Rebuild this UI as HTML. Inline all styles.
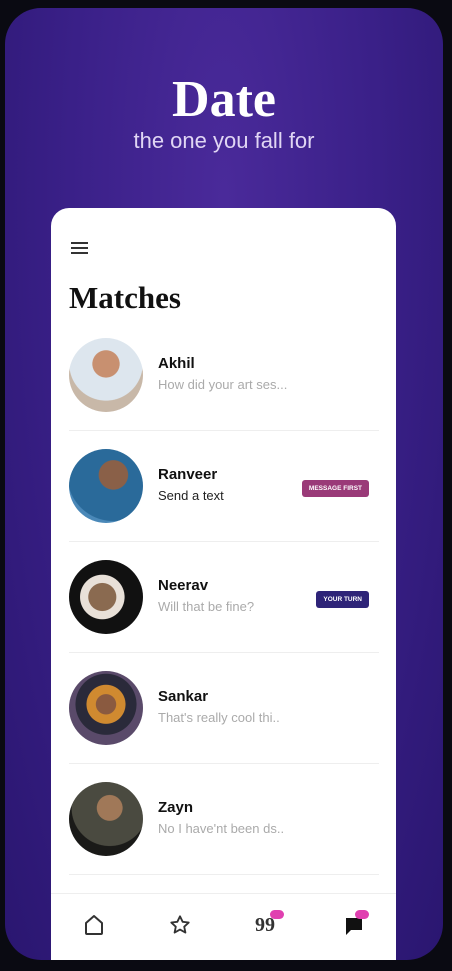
<!DOCTYPE html>
<html><head><style>
*{margin:0;padding:0;box-sizing:border-box}
body{width:452px;height:971px;background:#0a0a12;position:relative;overflow:hidden;font-family:"Liberation Sans",sans-serif}
.phone{position:absolute;left:5px;top:8px;width:438px;height:952px;border-radius:36px;background:radial-gradient(ellipse at 50% 20%,#4a2a9a,#3a2088 50%,#2a1670);overflow:hidden}
.title{position:absolute;top:62px;width:100%;text-align:center;color:#fff;font-family:"Liberation Serif",serif;font-weight:bold;font-size:52px}
.sub{position:absolute;top:120px;width:100%;text-align:center;color:#e0d6f4;font-size:22px}
.card{position:absolute;left:46px;top:200px;width:345px;height:760px;background:#fff;border-radius:18px 18px 0 0}
.ham{position:absolute;left:20px;top:34px;width:17px}
.ham i{display:block;height:2px;background:#333;margin-bottom:3px}
h1{position:absolute;left:18px;top:72px;font-family:"Liberation Serif",serif;font-size:31px;color:#111}
.row{position:absolute;left:18px;width:310px;height:111px}
.av{position:absolute;left:0;top:0;width:74px;height:74px;border-radius:50%}
.nm{position:absolute;left:89px;top:17px;font-weight:bold;font-size:15px;color:#111}
.ms{position:absolute;left:89px;top:39px;font-size:13px;color:#aaa}
.ln{position:absolute;left:0;right:0;top:92px;height:1px;background:#eee}
.bd{position:absolute;right:10px;top:31px;font-size:6.5px;font-weight:bold;color:#fff;padding:5px 7px;border-radius:3px}
.nav{position:absolute;left:0;top:685px;width:345px;border-top:1px solid #eee;height:75px}
.pill{position:absolute;width:14px;height:9px;border-radius:5px;background:#e040b0}
</style></head><body>
<div class="phone">
<div class="title">Date</div>
<div class="sub">the one you fall for</div>
<div class="card">
<div class="ham"><i></i><i></i><i></i></div>
<h1>Matches</h1>
<div class="row" style="top:130px"><div class="av" style="background:radial-gradient(circle at 50% 35%,#c89070 0 22%,#dde6ee 23% 60%,#c8b8a8 61%)"></div><div class="nm">Akhil</div><div class="ms">How did your art ses...</div><div class="ln"></div></div>
<div class="row" style="top:241px"><div class="av" style="background:radial-gradient(circle at 60% 35%,#8a6048 0 22%,#2a6a9a 23% 70%,#4a88b8 71%)"></div><div class="nm">Ranveer</div><div class="ms" style="color:#222">Send a text</div><div class="bd" style="background:#9a3a78">MESSAGE FIRST</div><div class="ln"></div></div>
<div class="row" style="top:352px"><div class="av" style="background:radial-gradient(circle at 45% 50%,#8a6a50 0 25%,#e8e0d8 26% 40%,#111 41%)"></div><div class="nm">Neerav</div><div class="ms">Will that be fine?</div><div class="bd" style="background:#2e2478">YOUR TURN</div><div class="ln"></div></div>
<div class="row" style="top:463px"><div class="av" style="background:radial-gradient(circle at 50% 45%,#8a5a40 0 18%,#d08a30 19% 35%,#2a2a3a 36% 55%,#5a4a6a 56%)"></div><div class="nm">Sankar</div><div class="ms">That's really cool thi..</div><div class="ln"></div></div>
<div class="row" style="top:574px"><div class="av" style="background:radial-gradient(circle at 55% 35%,#a07858 0 20%,#4a4a40 21% 60%,#1a1a18 61%)"></div><div class="nm">Zayn</div><div class="ms">No I have'nt been ds..</div><div class="ln"></div></div>
<div class="nav">
<svg style="position:absolute;left:33px;top:20px" width="20" height="22" viewBox="0 0 20 22"><path d="M2 9 L10 2 L18 9 V19 Q18 20 17 20 H3 Q2 20 2 19 Z" fill="none" stroke="#333" stroke-width="2" stroke-linejoin="round"/></svg>
<svg style="position:absolute;left:118px;top:20px" width="22" height="22" viewBox="0 0 24 24"><path d="M12 2.5l2.9 6 6.6.8-4.9 4.5 1.3 6.5L12 17l-5.9 3.3 1.3-6.5L2.5 9.3l6.6-.8z" fill="none" stroke="#333" stroke-width="2" stroke-linejoin="round"/></svg>
<div style="position:absolute;left:204px;top:20px;font-size:20px;font-weight:bold;color:#333;font-family:'Liberation Serif',serif">99</div>
<div class="pill" style="left:219px;top:16px"></div>
<svg style="position:absolute;left:293px;top:22px" width="20" height="20" viewBox="0 0 20 20"><path d="M2 2 H18 V14 H7 L2 19 Z" fill="#111"/></svg>
<div class="pill" style="left:304px;top:16px"></div>
</div>
</div>
</div>
</body></html>
